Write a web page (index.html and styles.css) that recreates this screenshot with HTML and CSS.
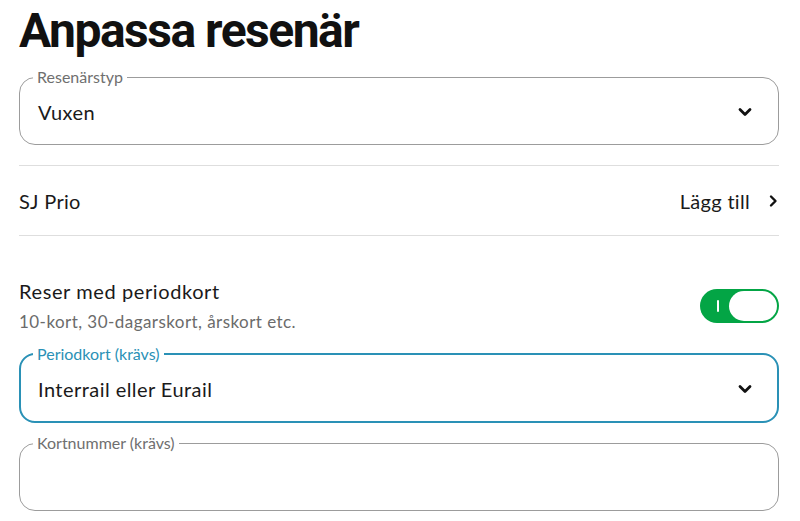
FILE: index.html
```html
<!DOCTYPE html>
<html lang="sv">
<head>
<meta charset="utf-8">
<title>Anpassa resenär</title>
<link rel="stylesheet" href="styles.css">
</head>
<body>
<div class="page">
  <h1 class="title">Anpassa resenär</h1>

  <fieldset class="field">
    <legend class="field-label">Resenärstyp</legend>
    <div class="field-row">
      <span class="field-value">Vuxen</span>
      <svg class="chev-down" width="24" height="24" viewBox="0 0 24 24" aria-hidden="true"><path d="M7 9.5 L12 14.5 L17 9.5" fill="none" stroke="#111" stroke-width="2.8" stroke-linecap="round" stroke-linejoin="round"/></svg>
    </div>
  </fieldset>

  <div class="list-row">
    <span class="list-label">SJ Prio</span>
    <span class="list-action">Lägg till
      <svg class="chev-right" width="16" height="16" viewBox="0 0 16 16" aria-hidden="true"><path d="M6 3.5 L10.5 8 L6 12.5" fill="none" stroke="#111" stroke-width="2.4" stroke-linecap="round" stroke-linejoin="round"/></svg>
    </span>
  </div>

  <div class="toggle-row">
    <div class="toggle-text">
      <div class="toggle-title">Reser med periodkort</div>
      <div class="toggle-sub">10-kort, 30-dagarskort, årskort etc.</div>
    </div>
    <div class="switch" role="switch" aria-checked="true">
      <span class="switch-mark"></span>
      <span class="switch-knob"></span>
    </div>
  </div>

  <fieldset class="field field-active">
    <legend class="field-label">Periodkort (krävs)</legend>
    <div class="field-row">
      <span class="field-value">Interrail eller Eurail</span>
      <svg class="chev-down" width="24" height="24" viewBox="0 0 24 24" aria-hidden="true"><path d="M7 9.5 L12 14.5 L17 9.5" fill="none" stroke="#111" stroke-width="2.8" stroke-linecap="round" stroke-linejoin="round"/></svg>
    </div>
  </fieldset>

  <fieldset class="field field-last">
    <legend class="field-label">Kortnummer (krävs)</legend>
    <div class="field-row"></div>
  </fieldset>
</div>
</body>
</html>
```

FILE: styles.css
```css
* { box-sizing: border-box; }

body {
  margin: 0;
  background: #ffffff;
  color: #1a1a1a;
  font-family: Lato, "Noto Sans", "DejaVu Sans", sans-serif;
}

.page {
  padding: 3px 21px 0 19px;
}

.title {
  margin: 0 0 10px 0;
  font-family: Roboto, "Liberation Sans", sans-serif;
  font-weight: 700;
  font-size: 48px;
  line-height: 56px;
  letter-spacing: -1.5px;
  color: #111;
}

.field {
  margin: 0;
  padding: 0 21px 5px 18px;
  border: 1px solid #9c9c9c;
  border-radius: 16px;
  min-width: 0;
}

.field-label {
  margin-left: -5px;
  padding: 0 4px;
  font-size: 16px;
  line-height: 16px;
  color: #6f6f6f;
}

.field-row {
  height: 54px;
  display: flex;
  align-items: center;
  justify-content: space-between;
}

.field-value {
  font-size: 20px;
  letter-spacing: 0.45px;
  color: #1a1a1a;
}

.chev-down { display: block; }

.list-row {
  margin-top: 20px;
  height: 71px;
  border-top: 1px solid #dedede;
  border-bottom: 1px solid #dedede;
  display: flex;
  align-items: center;
  justify-content: space-between;
  font-size: 20px;
  letter-spacing: 0.3px;
}

.list-action {
  display: flex;
  align-items: center;
  gap: 15px;
}

.chev-right { display: block; margin-right: -2px; }

.toggle-row {
  margin-top: 43px;
  display: flex;
  align-items: center;
  justify-content: space-between;
}

.toggle-title {
  font-size: 20px;
  line-height: 24px;
  letter-spacing: 0.6px;
  color: #1a1a1a;
}

.toggle-sub {
  margin-top: 8px;
  font-size: 17px;
  line-height: 22px;
  letter-spacing: 0.45px;
  color: #6b6b6b;
}

.switch {
  position: relative;
  width: 79px;
  height: 34px;
  border-radius: 17px;
  background: #03a545;
  display: flex;
  align-items: center;
  justify-content: flex-end;
  padding-right: 2px;
}

.switch-mark {
  position: absolute;
  left: 17px;
  top: 11px;
  width: 2px;
  height: 12px;
  background: #ffffff;
  border-radius: 1px;
}

.switch-knob {
  width: 48px;
  height: 30px;
  border-radius: 15px;
  background: #ffffff;
}

.field-active {
  margin-top: 13px;
  border: 2px solid #2a91b6;
  padding: 0 20px 5px 17px;
}

.field-active .field-label {
  color: #2a91b6;
}

.field-last {
  margin-top: 12px;
}
```
